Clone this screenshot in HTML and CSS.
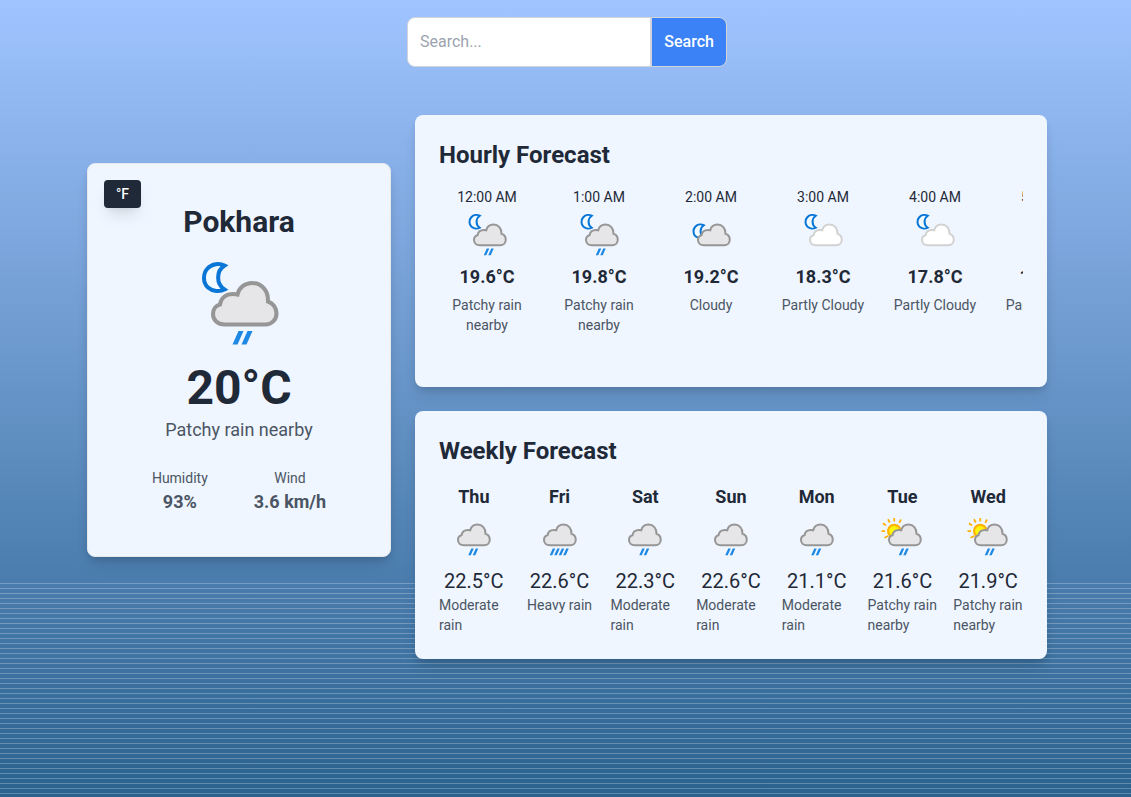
FILE: index.html
```html
<!DOCTYPE html>
<html lang="en">
<head>
<meta charset="utf-8">
<meta name="viewport" content="width=device-width, initial-scale=1">
<title>Weather</title>
<link rel="stylesheet" href="styles.css">
</head>
<body>
<svg class="sprite" aria-hidden="true">
  <defs>
    <radialGradient id="sun-fill" cx="0.4" cy="0.45" r="0.6"><stop offset="0" stop-color="#ffff10"/><stop offset="1" stop-color="#ffe000"/></radialGradient>
    <path id="cloud" d="M33.500 68.500C26.500 68.500 22 64 22 58C22 53 25 49.500 29 48.500C30 42 35 38 42 38C44 38 45.500 38.200 46.500 38.500C48 31.500 54 27 61 27C70.500 27 77.500 34.500 77 45.500C82 47 85.500 52 85.500 57.500C85.500 64 80.500 68.500 74.500 68.500Z"/>
    <path id="crescent" d="M33.500 9.500C28.500 7 21 7.500 16.500 12.500C11.500 18 12 27 17 31.500C21.500 35.500 29 36 33.500 33.500C25 28 25 15 33.500 9.500Z" fill="#f2fbff" stroke="#0a76d6" stroke-width="4" stroke-linejoin="miter"/>
    <path id="drops" d="M42.500 75H47.500L41.500 88.500H36.500ZM51.500 75H56.500L50.500 88.500H45.500Z" fill="#1e88e5"/>
    <symbol id="night-rain" viewBox="0 0 96 96">
      <use href="#crescent"/><use href="#cloud" class="cloud-grey"/><use href="#drops" x="5"/>
    </symbol>
    <symbol id="night-cloudy" viewBox="0 0 96 96">
      <use href="#crescent" y="19"/><use href="#cloud" class="cloud-grey"/>
    </symbol>
    <symbol id="night-partly" viewBox="0 0 96 96">
      <use href="#crescent"/><use href="#cloud" class="cloud-white"/>
    </symbol>
    <symbol id="rain" viewBox="0 0 96 96">
      <use href="#cloud" x="-6" class="cloud-grey"/><use href="#drops"/>
    </symbol>
    <symbol id="heavy-rain" viewBox="0 0 96 96">
      <use href="#cloud" x="-6" class="cloud-grey"/><use href="#drops" x="-9"/><use href="#drops" x="9"/>
    </symbol>
    <symbol id="day-rain" viewBox="0 0 96 96">
      <circle cx="32.500" cy="40" r="12.500" fill="url(#sun-fill)" stroke="#ffb000" stroke-width="4"/>
      <path d="M32.500 21V14M42.500 23.500L46 17M23.500 23L20 16.500M16 29L10 24.500M14 40H7M20.500 50L13 53.500" stroke="#ffb000" stroke-width="3.500" fill="none"/>
      <use href="#cloud" class="cloud-grey"/><use href="#drops" x="5"/>
    </symbol>
  </defs>
</svg>

<div class="page">
  <form class="search" role="search">
    <input class="search-input" type="text" placeholder="Search..." aria-label="Search for a city">
    <button class="search-button" type="button">Search</button>
  </form>

  <main class="dashboard">
    <section class="card current">
      <button class="unit-toggle" type="button">°F</button>
      <h1 class="city">Pokhara</h1>
      <svg class="icon-large" role="img" aria-label="Patchy rain nearby"><use href="#night-rain"/></svg>
      <p class="current-temp">20°C</p>
      <p class="current-text">Patchy rain nearby</p>
      <dl class="stats">
        <div class="stat"><dt>Humidity</dt><dd>93%</dd></div>
        <div class="stat"><dt>Wind</dt><dd>3.6 km/h</dd></div>
      </dl>
    </section>

    <div class="forecasts">
      <section class="card forecast">
        <h2 class="title">Hourly Forecast</h2>
        <ul class="hours">
          <li class="hour"><span class="time">12:00 AM</span><svg class="icon"><use href="#night-rain"/></svg><span class="hour-temp">19.6°C</span><span class="text">Patchy rain nearby</span></li>
          <li class="hour"><span class="time">1:00 AM</span><svg class="icon"><use href="#night-rain"/></svg><span class="hour-temp">19.8°C</span><span class="text">Patchy rain nearby</span></li>
          <li class="hour"><span class="time">2:00 AM</span><svg class="icon"><use href="#night-cloudy"/></svg><span class="hour-temp">19.2°C</span><span class="text">Cloudy</span></li>
          <li class="hour"><span class="time">3:00 AM</span><svg class="icon"><use href="#night-partly"/></svg><span class="hour-temp">18.3°C</span><span class="text">Partly Cloudy</span></li>
          <li class="hour"><span class="time">4:00 AM</span><svg class="icon"><use href="#night-partly"/></svg><span class="hour-temp">17.8°C</span><span class="text">Partly Cloudy</span></li>
          <li class="hour"><span class="time">5:00 AM</span><svg class="icon"><use href="#night-partly"/></svg><span class="hour-temp">17.5°C</span><span class="text">Partly Cloudy</span></li>
        </ul>
      </section>

      <section class="card forecast">
        <h2 class="title">Weekly Forecast</h2>
        <ul class="days">
          <li class="day"><span class="day-name">Thu</span><svg class="icon"><use href="#rain"/></svg><span class="day-temp">22.5°C</span><span class="text">Moderate rain</span></li>
          <li class="day"><span class="day-name">Fri</span><svg class="icon"><use href="#heavy-rain"/></svg><span class="day-temp">22.6°C</span><span class="text">Heavy rain</span></li>
          <li class="day"><span class="day-name">Sat</span><svg class="icon"><use href="#rain"/></svg><span class="day-temp">22.3°C</span><span class="text">Moderate rain</span></li>
          <li class="day"><span class="day-name">Sun</span><svg class="icon"><use href="#rain"/></svg><span class="day-temp">22.6°C</span><span class="text">Moderate rain</span></li>
          <li class="day"><span class="day-name">Mon</span><svg class="icon"><use href="#rain"/></svg><span class="day-temp">21.1°C</span><span class="text">Moderate rain</span></li>
          <li class="day"><span class="day-name">Tue</span><svg class="icon"><use href="#day-rain"/></svg><span class="day-temp">21.6°C</span><span class="text">Patchy rain nearby</span></li>
          <li class="day"><span class="day-name">Wed</span><svg class="icon"><use href="#day-rain"/></svg><span class="day-temp">21.9°C</span><span class="text">Patchy rain nearby</span></li>
        </ul>
      </section>
    </div>
  </main>
</div>
</body>
</html>
```
FILE: styles.css
```css
*, *::before, *::after { box-sizing: border-box; }
body, h1, h2, p, ul, dl, dd { margin: 0; }
ul { padding: 0; list-style: none; }
body {
  font-family: Roboto, sans-serif;
  font-size: 16px;
  line-height: 24px;
  color: #1f2937;
}
button, input { font: inherit; }
.sprite { position: absolute; width: 0; height: 0; }
.cloud-grey { fill: #e6e6e8; stroke: #969696; stroke-width: 4; }
.cloud-white { fill: #ffffff; stroke: #d2d2d2; stroke-width: 4; }

.page {
  position: relative;
  min-height: 100vh;
  padding: 17px 0 16px 3px;
  background: linear-gradient(#a0c4ff, #2a628f);
}
.page::before {
  content: "";
  position: absolute;
  inset: auto 0 0 0;
  height: 214px;
  background: repeating-linear-gradient(rgba(255, 255, 255, 0.25) 0 1px, transparent 1px 5px);
}

.search {
  display: flex;
  width: 320px;
  margin: 0 auto 48px;
}
.search-input {
  flex: 1;
  min-width: 0;
  padding: 12px;
  border: 1px solid #d1d5db;
  border-radius: 8px 0 0 8px;
  background: #ffffff;
  color: #1f2937;
}
.search-input::placeholder { color: #9ca3af; }
.search-button {
  padding: 12px;
  border: 1px solid #d1d5db;
  border-radius: 0 8px 8px 0;
  background: #3b82f6;
  color: #ffffff;
  font-weight: 500;
}

.dashboard {
  position: relative;
  display: grid;
  grid-template-columns: repeat(3, minmax(0, 1fr));
  gap: 24px;
  align-items: start;
  max-width: 1008px;
  margin: 0 auto;
  padding: 0 24px;
}
.card {
  border-radius: 8px;
  background: #eff6ff;
  box-shadow: 0 4px 6px -1px rgba(0, 0, 0, 0.1), 0 10px 15px -3px rgba(0, 0, 0, 0.1);
}

.current {
  position: relative;
  display: flex;
  flex-direction: column;
  align-items: center;
  margin-top: 48px;
  padding: 40px 24px;
  border: 1px solid #e5e7eb;
}
.unit-toggle {
  position: absolute;
  top: 16px;
  left: 16px;
  padding: 4px 12px;
  border: 0;
  border-radius: 4px;
  background: #1f2937;
  color: #ffffff;
  font-size: 14px;
  font-weight: 500;
  line-height: 20px;
  box-shadow: 0 10px 15px -3px rgba(0, 0, 0, 0.1), 0 4px 6px -4px rgba(0, 0, 0, 0.1);
}
.city { font-size: 30px; line-height: 36px; font-weight: 700; }
.icon-large { width: 96px; height: 96px; margin: 16px 0 12px; }
.current-temp { font-size: 48px; line-height: 48px; font-weight: 700; }
.current-text { margin: 4px 0 24px; font-size: 18px; line-height: 28px; color: #4b5563; }
.stats { display: flex; gap: 46px; color: #4b5563; }
.stat { text-align: center; font-size: 14px; line-height: 20px; }
.stat dd { font-size: 18px; line-height: 28px; font-weight: 700; }

.forecasts { grid-column: span 2; display: grid; grid-template-columns: minmax(0, 1fr); gap: 24px; }
.forecast { padding: 24px; }
.title { margin-bottom: 16px; font-size: 24px; line-height: 32px; font-weight: 700; }
.icon { display: block; width: 48px; height: 48px; }
.text { font-size: 14px; line-height: 20px; color: #4b5563; }

.hours {
  display: flex;
  gap: 16px;
  padding-bottom: 28px;
  overflow-x: auto;
  scrollbar-width: none;
}
.hour {
  flex: 0 0 96px;
  display: flex;
  flex-direction: column;
  align-items: center;
  gap: 4px;
  text-align: center;
}
.time { font-size: 14px; line-height: 20px; }
.hour-temp { font-size: 18px; line-height: 28px; font-weight: 700; }

.days { display: grid; grid-template-columns: repeat(7, minmax(0, 1fr)); gap: 16px; }
.day { display: flex; flex-direction: column; align-items: center; }
.day .icon { margin-bottom: 8px; }
.day-name { font-size: 18px; line-height: 28px; font-weight: 700; }
.day-temp { font-size: 20px; line-height: 28px; }
```
